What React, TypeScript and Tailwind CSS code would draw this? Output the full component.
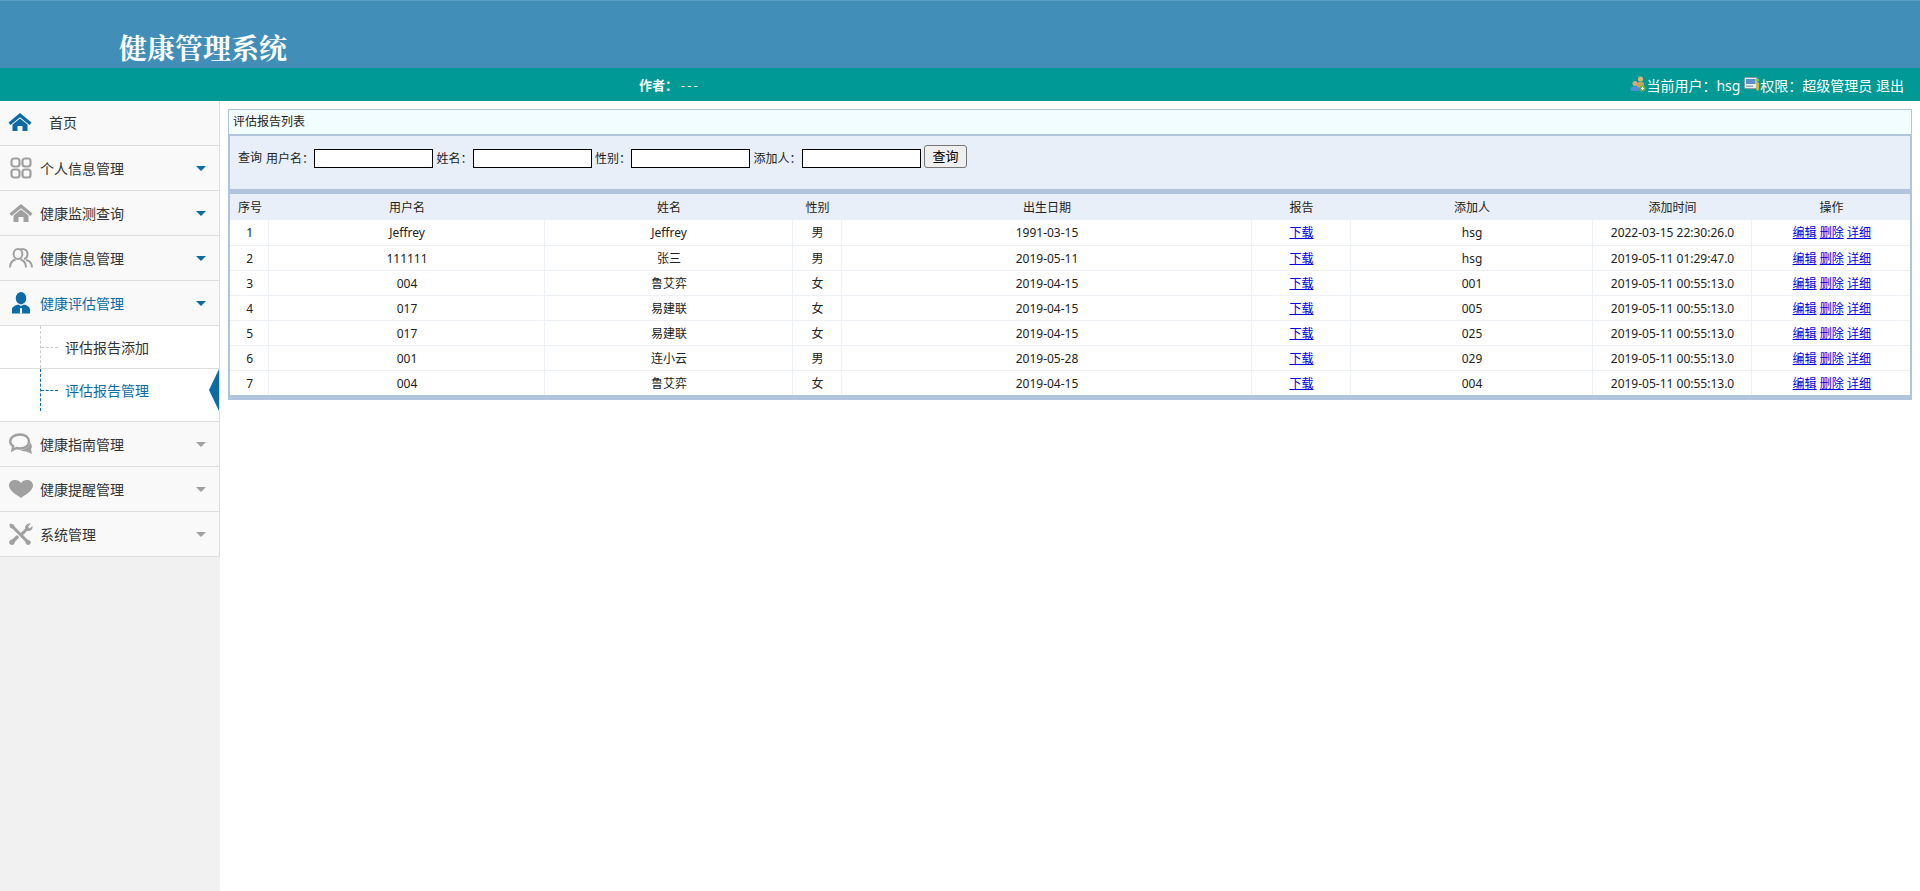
import React from "react";

const font = "font-['Noto_Sans','Noto_Sans_CJK_SC',sans-serif]";

const HomeIcon = ({ c }: { c: string }) => (
  <svg width="24" height="20" viewBox="0 0 24 20">
    <path d="M0.5 10.5 L12 1 L23.5 10.5 L21.5 13 L12 5.2 L2.5 13 Z" fill={c} />
    <path d="M4.5 12.5 L12 6.5 L19.5 12.5 V19 H14.5 V14 H9.5 V19 H4.5 Z" fill={c} />
  </svg>
);
const GridIcon = () => (
  <svg width="22" height="22" viewBox="0 0 22 22" fill="none" stroke="#a0a0a0" strokeWidth="2.2">
    <rect x="1.5" y="1.5" width="8" height="8" rx="2.5" />
    <rect x="12.5" y="1.5" width="8" height="8" rx="2.5" />
    <rect x="1.5" y="12.5" width="8" height="8" rx="2.5" />
    <rect x="12.5" y="12.5" width="8" height="8" rx="2.5" />
  </svg>
);
const UsersIcon = () => (
  <svg width="24" height="20" viewBox="0 0 24 20" fill="none" stroke="#a0a0a0" strokeWidth="2">
    <ellipse cx="9" cy="6" rx="4.4" ry="5" />
    <path d="M11.5 1.5 C13 0.8 18.5 0.4 18.5 6 C18.5 8.5 17 10.5 15 11" />
    <path d="M1 19.5 C1 14.5 3.5 12.5 6.5 11.5 M11.5 11.5 C14.5 12.5 17 14.5 17 19.5" />
    <path d="M17 12 C20.5 12.8 23 15 23 19.5" />
  </svg>
);
const UserIcon = () => (
  <svg width="20" height="22" viewBox="0 0 20 22">
    <ellipse cx="10" cy="6.2" rx="5.2" ry="6.2" fill="#0a6ba5" />
    <path d="M1 21.5 V17.5 C1 15 4 13.5 7 12.5 L10 14 L13 12.5 C16 13.5 19 15 19 17.5 V21.5 Z" fill="#0a6ba5" />
    <path d="M9.2 16 H10.8 L11.2 21.5 H8.8 Z" fill="#fff" />
  </svg>
);
const ChatIcon = () => (
  <svg width="24" height="22" viewBox="0 0 24 22" fill="none" stroke="#a0a0a0">
    <path strokeWidth="2.4" d="M11 1.5 C16.5 1.5 20 4.6 20 8.5 C20 12.4 16.5 15.5 11 15.5 C9.5 15.5 8.5 15.3 7.5 15 L3.5 17 L4.2 13.2 C2.3 12 1.2 10.4 1.2 8.5 C1.2 4.6 5.5 1.5 11 1.5 Z" />
    <path d="M21 9.5 C23 11.5 23.5 14 22 16.2 L23 21 L17.5 18.4 C15 18.6 12.5 18 11 17 C15 17 20.5 15 21 9.5 Z" fill="#a0a0a0" stroke="none" />
  </svg>
);
const HeartIcon = () => (
  <svg width="24" height="18" viewBox="0 0 24 18">
    <path d="M12 18 C8 15 0 11 0 5.5 C0 2 3 0 6 0 C8.5 0 10.8 1.2 12 3 C13.2 1.2 15.5 0 18 0 C21 0 24 2 24 5.5 C24 11 16 15 12 18 Z" fill="#a0a0a0" />
  </svg>
);
const ToolsIcon = () => (
  <svg width="24" height="22" viewBox="0 0 24 22" fill="#a0a0a0">
    <path d="M1.5 0.5 L4.5 1.5 L6 4 L19 17 C20.5 16.8 21.8 18 21.8 19.5 C21.8 20.9 20.6 22 19.2 22 C17.6 22 16.4 20.6 16.7 19 L3.8 6 L1.3 4.8 L0.3 1.7 Z" />
    <path d="M23.5 3 C24 5.5 22.8 7.5 20.4 8 C19.7 8.1 19 8.1 18.4 7.8 L13.5 12.6 L11.4 10.5 L16.2 5.6 C15.8 3.3 17.3 0.8 20.5 0.5 C21 0.5 21.4 0.5 21.8 0.7 L19 3.5 L20.6 5.5 Z" />
    <path d="M8 12 L10.2 14.2 L5.6 19.2 C5.8 20.6 4.4 22 3 22 C1.4 22 0 20.8 0.2 19 C0.4 17.6 1.6 16.6 3 16.6 Z" />
  </svg>
);

const PeopleImg = () => (
  <svg width="16" height="16" viewBox="0 0 16 16" className="inline-block">
    <circle cx="10.5" cy="3" r="2.6" fill="#e3b26b" />
    <path d="M7 12 V8 C7 6.5 9 5.8 10.5 5.8 C12 5.8 14 6.5 14 8 V12 Z" fill="#c9a55c" />
    <circle cx="5" cy="7.5" r="2.5" fill="#dca77a" />
    <path d="M0.5 15 V12.5 C0.5 11 3 10 5 10 C7 10 9.5 11 9.5 12.5 V15 Z" fill="#4d8fd0" />
    <circle cx="12.5" cy="12.5" r="3" fill="#6cb33f" />
    <path d="M11 12.5 H14 M12.5 11 V14" stroke="#fff" strokeWidth="1" />
  </svg>
);
const DeviceImg = () => (
  <svg width="16" height="15" viewBox="0 0 16 15" className="inline-block">
    <rect x="0.5" y="0.5" width="12.5" height="11" rx="1" fill="#e6edf2" stroke="#8a9aa5" />
    <rect x="2" y="2" width="9.5" height="5" fill="#5b8fc7" />
    <rect x="2" y="8.5" width="7" height="1.5" fill="#9aa8b3" />
    <circle cx="13.5" cy="3" r="1.6" fill="#8cc63f" />
    <rect x="12.3" y="5.5" width="2.6" height="8" fill="#d9b92f" />
  </svg>
);

const Caret = ({ c }: { c: string }) => (
  <span className={`w-0 h-0 border-x-[5px] border-x-transparent border-t-[5px] ${c}`} />
);

const Item = ({
  icon,
  label,
  active,
  grayCaret,
}: {
  icon: React.ReactNode;
  label: string;
  active?: boolean;
  grayCaret?: boolean;
}) => (
  <div className="h-[45px] flex items-center bg-[#f9f9f9] border-b border-[#dddddd] shrink-0">
    <div className="w-[40px] flex justify-center pl-[1px] shrink-0">{icon}</div>
    <span className={`text-[14px] flex-1 ${active ? "text-[#0a6ba5]" : "text-[#333333]"}`}>{label}</span>
    <span className="mr-[13px] flex">
      <Caret c={grayCaret ? "border-t-[#a0a0a0]" : "border-t-[#0a6ba5]"} />
    </span>
  </div>
);

const rows = [
  ["1", "Jeffrey", "Jeffrey", "男", "1991-03-15", "hsg", "2022-03-15 22:30:26.0"],
  ["2", "111111", "张三", "男", "2019-05-11", "hsg", "2019-05-11 01:29:47.0"],
  ["3", "004", "鲁艾弈", "女", "2019-04-15", "001", "2019-05-11 00:55:13.0"],
  ["4", "017", "易建联", "女", "2019-04-15", "005", "2019-05-11 00:55:13.0"],
  ["5", "017", "易建联", "女", "2019-04-15", "025", "2019-05-11 00:55:13.0"],
  ["6", "001", "连小云", "男", "2019-05-28", "029", "2019-05-11 00:55:13.0"],
  ["7", "004", "鲁艾弈", "女", "2019-04-15", "004", "2019-05-11 00:55:13.0"],
];

const widths = [38, 276, 248, 49, 410, 99, 242, 159, 159];
const heads = ["序号", "用户名", "姓名", "性别", "出生日期", "报告", "添加人", "添加时间", "操作"];

const Link = ({ children }: { children: React.ReactNode }) => (
  <a href="#" className="text-[#0000dd] underline">{children}</a>
);

const Field = ({ label }: { label: string }) => (
  <>
    <span>{label}</span>
    <input className="w-[119px] h-[19px] border border-black bg-white mr-[3.5px]" />
  </>
);

const td = "text-center p-0 pt-[2px] pl-[2px] border-r border-[#edf1f6]";

export default function App() {
  return (
    <div className={`${font} min-h-[891px] flex flex-col bg-white text-[#333333]`}>
      <header className="h-[68px] bg-[#418fb9] border-t border-[#5aa0c6] flex items-end pl-[119px] shrink-0">
        <h1 className="text-[28px] leading-[28px] mb-[7px] font-bold text-white font-['Noto_Serif_CJK_SC','Liberation_Serif','Noto_Sans_CJK_SC',serif]">
          健康管理系统
        </h1>
      </header>
      <div className="h-[33px] pt-[2px] bg-[#009996] text-white flex items-center justify-between shrink-0 text-[14px]">
        <div className="ml-[639px] text-[13px] font-bold flex items-center">
          作者：<span className="font-normal ml-[3px] tracking-[2px]">---</span>
        </div>
        <div className="mr-[16px] flex items-center">
          <span className="flex -mt-[3px]"><PeopleImg /></span>
          <span>当前用户：hsg</span>
          <span className="ml-[4px] flex -mt-[3px]"><DeviceImg /></span>
          <span>权限：超级管理员 退出</span>
        </div>
      </div>
      <div className="flex flex-1">
        <aside className="w-[220px] bg-[#f1f1f1] shrink-0">
          <div className="border-r border-[#dddddd] flex flex-col">
            <div className="h-[45px] flex items-center bg-[#f9f9f9] border-b border-[#dddddd] pb-[2px]">
              <div className="w-[40px] flex justify-center shrink-0"><HomeIcon c="#0a6ba5" /></div>
              <span className="text-[14px] ml-[9px]">首页</span>
            </div>
            <Item icon={<GridIcon />} label="个人信息管理" />
            <Item icon={<HomeIcon c="#a0a0a0" />} label="健康监测查询" />
            <Item icon={<UsersIcon />} label="健康信息管理" />
            <Item icon={<UserIcon />} label="健康评估管理" active />
            <div className="bg-white border-b border-[#dddddd] h-[96px] flex flex-col relative">
              <div className="h-[43px] border-b border-[#dddddd] flex items-center relative">
                <div className="absolute left-[40px] top-0 bottom-0 border-l border-dashed border-[#cccccc]" />
                <div className="absolute left-[41px] top-[21px] w-[17px] border-t border-dashed border-[#cccccc]" />
                <span className="ml-[65px] text-[14px]">评估报告添加</span>
              </div>
              <div className="h-[42px] flex items-center relative">
                <div className="absolute left-[40px] top-0 bottom-0 border-l border-dashed border-[#0a6ba5]" />
                <div className="absolute left-[41px] top-[21px] w-[17px] border-t border-dashed border-[#0a6ba5]" />
                <span className="ml-[65px] text-[14px] text-[#0a6ba5]">评估报告管理</span>
                <div className="absolute right-0 top-0 w-0 h-0 border-y-[21px] border-y-transparent border-r-[10px] border-r-[#0a6ba5]" />
              </div>
            </div>
            <Item icon={<ChatIcon />} label="健康指南管理" grayCaret />
            <Item icon={<HeartIcon />} label="健康提醒管理" grayCaret />
            <Item icon={<ToolsIcon />} label="系统管理" grayCaret />
          </div>
        </aside>
        <main className="flex-1 px-[8px] pt-[8px] text-[12px] text-[#222222]">
          <div className="h-[27px] bg-[#f2fdff] border border-[#b0c4de] border-b-[2px] flex items-center pl-[4px]">
            评估报告列表
          </div>
          <div className="h-[53px] bg-[#e8eff8] border-x-2 border-[#b0c4de] flex items-start pt-[12px] pl-[8px]">
            <span className="leading-[19px] mr-[4px]">查询</span>
            <div className="flex items-center leading-[19px]">
              <Field label="用户名：" />
              <Field label="姓名：" />
              <Field label="性别：" />
              <Field label="添加人：" />
              <button className="h-[23px] w-[43px] border border-[#767676] rounded-[3px] bg-[#efefef] text-[13px] text-black -mt-[3px]">
                查询
              </button>
            </div>
          </div>
          <div className="h-[5px] bg-[#b0c4de]" />
          <div className="border-x-2 border-[#b0c4de]">
            <table className="w-full table-fixed border-collapse">
              <colgroup>
                {widths.map((w, i) => (
                  <col key={i} style={{ width: w }} />
                ))}
              </colgroup>
              <thead>
                <tr className="h-[26px] bg-[#e8eff8]">
                  {heads.map((h) => (
                    <th key={h} className="font-normal text-center p-0 pt-[1px] pl-[2px]">{h}</th>
                  ))}
                </tr>
              </thead>
              <tbody>
                {rows.map((r) => (
                  <tr key={r[0]} className="h-[25px] bg-white border-b border-[#edf1f6] last:border-b-0">
                    <td className={td}>{r[0]}</td>
                    <td className={td}>{r[1]}</td>
                    <td className={td}>{r[2]}</td>
                    <td className={td}>{r[3]}</td>
                    <td className={td}>{r[4]}</td>
                    <td className={td}><Link>下载</Link></td>
                    <td className={td}>{r[5]}</td>
                    <td className={td}>{r[6]}</td>
                    <td className="text-center p-0 pt-[2px] pl-[2px]">
                      <Link>编辑</Link> <Link>删除</Link> <Link>详细</Link>
                    </td>
                  </tr>
                ))}
              </tbody>
            </table>
          </div>
          <div className="h-[5px] bg-[#b0c4de]" />
        </main>
      </div>
    </div>
  );
}
